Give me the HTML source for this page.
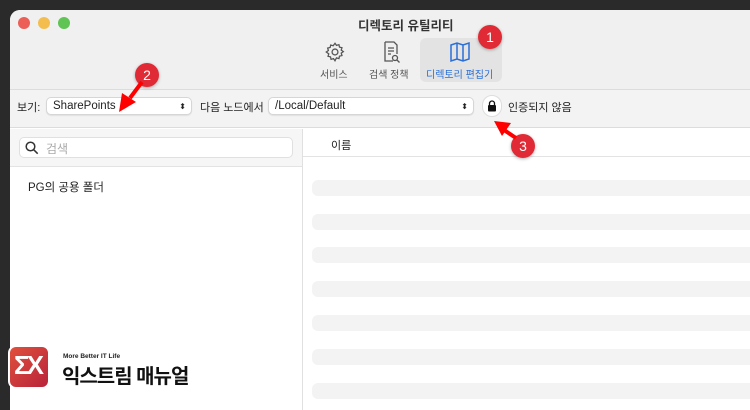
<!DOCTYPE html>
<html><head><meta charset="utf-8"><style>
*{margin:0;padding:0;box-sizing:border-box}
body{width:750px;height:400px;background:#2a2a2a;overflow:hidden;position:relative;font-family:"Liberation Sans","Noto Sans CJK KR",sans-serif;font-size:11px;color:#222}
.win{position:absolute;left:10px;top:10px;width:760px;height:400px;background:#fff;border-radius:10px 0 0 0;overflow:hidden}
.top{position:absolute;left:0;top:0;width:100%;height:80px;background:#f0f0f0;border-bottom:1px solid #dcdcdc}
.row2{position:absolute;left:0;top:80px;width:100%;height:38px;background:#f3f3f3;border-bottom:1px solid #dcdcdc}
.dot{position:absolute;top:7px;width:12px;height:12px;border-radius:50%}
.abs{position:absolute}
.sel{position:absolute;background:#fff;border:1px solid #d6d6d6;border-radius:5px;height:18px;box-shadow:0 1px 1px rgba(0,0,0,.08);font-size:11.5px;padding:0 6px;line-height:17px}
.badge{position:absolute;width:24px;height:24px;border-radius:50%;background:#e02a35;color:#fff;font-size:14px;text-align:center;line-height:24px;box-shadow:0 1px 3px rgba(0,0,0,.3)}
.stripe{position:absolute;left:302px;height:16px;width:460px;background:#f3f3f3;border-radius:6px}
</style></head><body>
<div class="win">
 <div class="top"></div>
 <div class="dot" style="left:8px;background:#ec5f56"></div>
 <div class="dot" style="left:28px;background:#f4be4f"></div>
 <div class="dot" style="left:48px;background:#5fc453"></div>
 <div class="abs" style="left:348px;top:5px;font-size:12.5px;font-weight:bold;color:#333">디렉토리 유틸리티</div>
 <div class="abs" style="left:410px;top:28px;width:82px;height:44px;background:#e3e3e3;border-radius:6px"></div>
 <svg class="abs" style="left:314px;top:31px" width="22" height="22" viewBox="0 0 24 24" fill="none" stroke="#555" stroke-width="1.4"><circle cx="12" cy="12" r="3.2"/><path d="M12 2.5l1.6 2.3 2.7-.8.6 2.7 2.7.6-.8 2.7 2.3 1.6-2.3 1.6.8 2.7-2.7.6-.6 2.7-2.7-.8L12 21.5l-1.6-2.3-2.7.8-.6-2.7-2.7-.6.8-2.7L2.5 12l2.3-1.6-.8-2.7 2.7-.6.6-2.7 2.7.8z"/></svg>
 <div class="abs" style="left:310px;top:56px;font-size:10px;color:#555">서비스</div>
 <svg class="abs" style="left:370px;top:30px" width="22" height="24" viewBox="0 0 22 24" fill="none" stroke="#555" stroke-width="1.3"><path d="M5 2h9l3 3v9M5 2v19h8"/><path d="M8 8h6M8 11h6M8 14h3"/><circle cx="15" cy="18" r="2.5"/><path d="M17 20l2.5 2.5"/></svg>
 <div class="abs" style="left:359px;top:56px;font-size:10px;color:#555">검색 정책</div>
 <svg class="abs" style="left:438px;top:31px" width="24" height="22" viewBox="0 0 24 22" fill="none" stroke="#2a6fd8" stroke-width="1.5"><path d="M3 4l6-2 6 2 6-2v16l-6 2-6-2-6 2z M9 2v16 M15 4v16"/></svg>
 <div class="abs" style="left:416px;top:56px;font-size:10px;color:#2a6fd8">디렉토리 편집기</div>
 <div class="row2"></div>
 <div class="abs" style="left:7px;top:89px;font-size:11px">보기:</div>
 <div class="sel" style="left:36px;top:87px;width:146px">SharePoints<span style="position:absolute;right:5px;font-size:8px;top:0">⬍</span></div>
 <div class="abs" style="left:190px;top:89px;font-size:11px">다음 노드에서</div>
 <div class="sel" style="left:258px;top:87px;width:206px">/Local/Default<span style="position:absolute;right:5px;font-size:8px;top:0">⬍</span></div>
 <div class="abs" style="left:472px;top:85px;width:20px;height:22px;border-radius:10px;background:#fff;border:1px solid #ddd"></div>
 <svg class="abs" style="left:477px;top:90px" width="10" height="12" viewBox="0 0 10 12"><path d="M2.5 5V3.5a2.5 2.5 0 0 1 5 0V5" fill="none" stroke="#111" stroke-width="1.3"/><rect x="1" y="5" width="8" height="6.5" rx="1" fill="#111"/></svg>
 <div class="abs" style="left:498px;top:89px;font-size:11px">인증되지 않음</div>
 <div class="abs" style="left:0;top:119px;width:292px;height:38px;background:#f6f6f6;border-bottom:1px solid #e3e3e3"></div>
 <div class="abs" style="left:9px;top:127px;width:274px;height:21px;background:#fff;border:1px solid #e0e0e0;border-radius:5px"></div>
 <svg class="abs" style="left:15px;top:131px" width="14" height="14" viewBox="0 0 14 14" fill="none" stroke="#333" stroke-width="1.5"><circle cx="5.5" cy="5.5" r="4.3"/><path d="M8.7 8.7l4 4"/></svg>
 <div class="abs" style="left:36px;top:130px;font-size:12px;color:#aaa">검색</div>
 <div class="abs" style="left:18px;top:169px;font-size:11.5px">PG의 공용 폴더</div>
 <div class="abs" style="left:292px;top:119px;width:1px;height:290px;background:#e0e0e0"></div>
 <div class="abs" style="left:293px;top:146px;width:470px;height:1px;background:#e3e3e3"></div>
 <div class="abs" style="left:321px;top:127px;font-size:11px">이름</div>
 <div class="stripe" style="top:170px"></div><div class="stripe" style="top:204px"></div><div class="stripe" style="top:237px"></div><div class="stripe" style="top:271px"></div><div class="stripe" style="top:305px"></div><div class="stripe" style="top:339px"></div><div class="stripe" style="top:373px"></div>
</div>
<div class="badge" style="left:478px;top:25px">1</div>
<div class="badge" style="left:135px;top:63px">2</div>
<div class="badge" style="left:511px;top:134px">3</div>
<svg class="abs" style="left:0;top:0;position:absolute" width="750" height="400">
 <path d="M142 82 L130 98" stroke="#f00" stroke-width="4"/><polygon points="119,112 122,93 136,102" fill="#f00"/>
 <path d="M516 138 L504 130" stroke="#f00" stroke-width="4"/><polygon points="494,121 511,123 502,136" fill="#f00"/>
</svg>
<div class="abs" style="left:8px;top:345px;width:42px;height:44px;border-radius:8px;background:linear-gradient(135deg,#e0503d,#b8233a);border:2px solid #fff"></div>
<div class="abs" style="left:14px;top:350px;font-size:26px;font-weight:bold;color:#fff;font-family:'Liberation Sans',sans-serif;letter-spacing:-3px">ΣX</div>
<div class="abs" style="left:63px;top:353px;font-size:6.5px;font-weight:bold;color:#222">More Better IT Life</div>
<div class="abs" style="left:62px;top:360px;font-size:20px;font-weight:bold;color:#111;letter-spacing:-1px">익스트림 매뉴얼</div>
</body></html>
